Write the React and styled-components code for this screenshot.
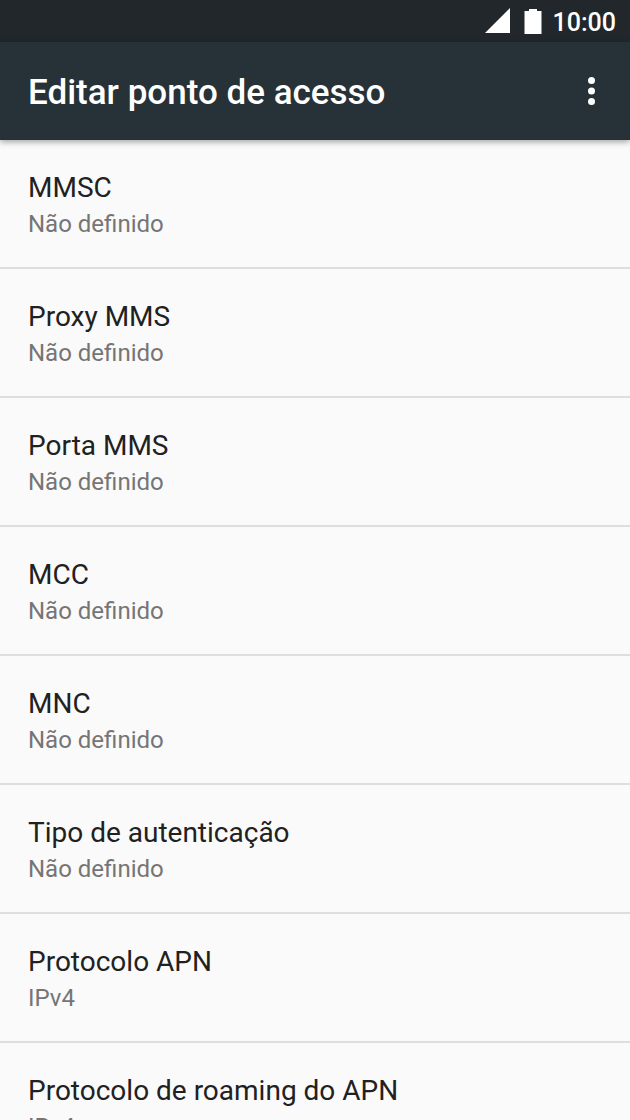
import React from "react";
import styled, { createGlobalStyle } from "styled-components";

const GlobalStyle = createGlobalStyle`
  * {
    box-sizing: border-box;
  }
  html,
  body,
  #root {
    height: 100%;
    margin: 0;
  }
  body {
    background-color: #fafafa;
    font-family: Roboto, sans-serif;
  }
`;

const Screen = styled.div`
  display: flex;
  flex-direction: column;
  height: 100%;
  overflow: hidden;
`;

const StatusBar = styled.div`
  display: flex;
  flex-shrink: 0;
  justify-content: flex-end;
  align-items: center;
  height: 42px;
  padding: 0 14px;
  background-color: #21272b;
  color: white;
  svg {
    display: block;
    fill: currentColor;
  }
`;

const Clock = styled.time`
  margin-left: 11px;
  padding-top: 4px;
  font-size: 25px;
  font-weight: 500;
  line-height: 38px;
`;

const BatteryIcon = styled.svg`
  margin-left: 14px;
`;

const Toolbar = styled.header`
  position: relative;
  z-index: 1;
  display: flex;
  flex-shrink: 0;
  justify-content: space-between;
  align-items: center;
  height: 98px;
  padding: 0 18px 0 28px;
  background-color: #263238;
  color: white;
  box-shadow: 0 2px 6px rgba(0, 0, 0, 0.35);
`;

const Title = styled.h1`
  margin: 0;
  padding-top: 4px;
  font-size: 35px;
  font-weight: 500;
  line-height: 42px;
`;

const MenuButton = styled.button`
  display: flex;
  justify-content: center;
  align-items: center;
  width: 42px;
  height: 56px;
  padding: 0;
  border: none;
  background: none;
  color: inherit;
  cursor: pointer;
  svg {
    display: block;
    fill: currentColor;
  }
`;

const List = styled.ul`
  flex: 1;
  min-height: 0;
  margin: 0;
  padding: 0;
  overflow: hidden;
  list-style: none;
`;

const Row = styled.li`
  border-bottom: 2px solid #dedede;
`;

const RowButton = styled.button`
  display: block;
  width: 100%;
  padding: 30px 28px 25px;
  border: none;
  background: none;
  font-family: inherit;
  text-align: left;
  cursor: pointer;
`;

const RowTitle = styled.span`
  display: block;
  color: #212121;
  font-size: 28px;
  line-height: 36px;
`;

const RowSummary = styled.span`
  display: block;
  color: #757575;
  font-size: 24px;
  line-height: 36px;
`;

const settings = [
  { title: "MMSC", summary: "Não definido" },
  { title: "Proxy MMS", summary: "Não definido" },
  { title: "Porta MMS", summary: "Não definido" },
  { title: "MCC", summary: "Não definido" },
  { title: "MNC", summary: "Não definido" },
  { title: "Tipo de autenticação", summary: "Não definido" },
  { title: "Protocolo APN", summary: "IPv4" },
  { title: "Protocolo de roaming do APN", summary: "IPv4" },
];

const App = () => {
  return (
    <Screen>
      <GlobalStyle />
      <StatusBar>
        <svg width="25" height="26" viewBox="0 0 25 26" aria-hidden="true">
          <path d="M0 25H25V0z" />
        </svg>
        <BatteryIcon width="18" height="26" viewBox="0 0 18 26" aria-hidden="true">
          <path d="M5 1h8v2h4.500v23H0.500V3H5z" />
        </BatteryIcon>
        <Clock>10:00</Clock>
      </StatusBar>
      <Toolbar>
        <Title>Editar ponto de acesso</Title>
        <MenuButton type="button" aria-label="Mais opções">
          <svg width="8" height="30" viewBox="0 0 8 30">
            <circle cx="4.500" cy="4.500" r="3.500" />
            <circle cx="4.500" cy="15" r="3.500" />
            <circle cx="4.500" cy="25.500" r="3.500" />
          </svg>
        </MenuButton>
      </Toolbar>
      <List>
        {settings.map((item) => (
          <Row key={item.title}>
            <RowButton type="button">
              <RowTitle>{item.title}</RowTitle>
              <RowSummary>{item.summary}</RowSummary>
            </RowButton>
          </Row>
        ))}
      </List>
    </Screen>
  );
};

export default App;
